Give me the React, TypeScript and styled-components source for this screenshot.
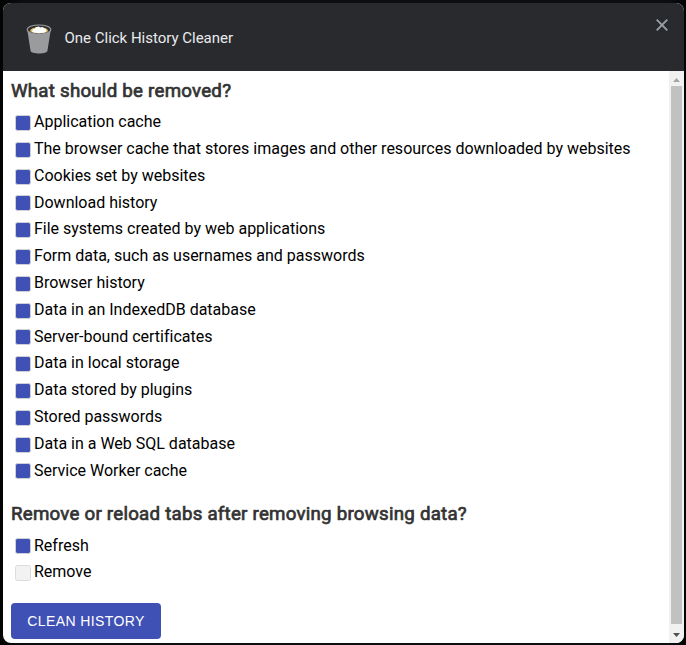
import React, { useState } from "react";
import styled, { createGlobalStyle } from "styled-components";

const GlobalStyle = createGlobalStyle`
  * { box-sizing: border-box; }
  body { margin: 0; background: #0b0c0e; font-family: Roboto, "Liberation Sans", sans-serif; }
`;

const Backdrop = styled.div`
  height: 645px;
  padding: 3px 2px 2px 3px;
  background: linear-gradient(90deg, #030303 0, #0c0d10 22px, #0c0d10 670px, #030305 100%);
`;

const Dialog = styled.div`
  display: flex;
  flex-direction: column;
  height: 640px;
  overflow: hidden;
  border-radius: 8px;
  background: #fff;
`;

const Header = styled.header`
  display: flex;
  flex: none;
  height: 68px;
  align-items: center;
  padding: 2px 15px 0 23px;
  background: #292a2d;
`;

const Title = styled.div`
  flex: 1;
  margin-left: 12.5px;
  color: #e8eaed;
  font-size: 15px;
  line-height: 20px;
  letter-spacing: -0.01px;
`;

const CloseButton = styled.button`
  display: flex;
  align-self: flex-start;
  margin-top: 13px;
  padding: 0;
  border: 0;
  background: none;
`;

const Body = styled.div`
  display: flex;
  flex: 1;
  min-height: 0;
`;

const Content = styled.main`
  flex: 1;
  padding: 9px 8px 0;
`;

const Heading = styled.h3`
  height: 22px;
  margin: 0;
  color: #333;
  font-size: 18.72px;
  font-weight: 400;
  line-height: 22px;
  letter-spacing: 0.235px;
  -webkit-text-stroke: 0.7px #333;
`;

const Options = styled.div<{ $top: number }>`
  padding-top: ${({ $top }) => $top}px;
`;

const Option = styled.label`
  display: flex;
  align-items: flex-start;
  height: 26.8px;
  padding: 0.2px 0 0 4px;
  color: #000;
  font-size: 16px;
  line-height: 21px;
  letter-spacing: -0.005px;
  white-space: nowrap;
`;

const Checkbox = styled.input`
  appearance: none;
  flex: none;
  width: 16px;
  height: 16px;
  margin: 3.8px 3px 0 0;
  border: 1px solid #dcdcdc;
  border-radius: 2.5px;
  background: #f2f2f2;

  &:checked {
    border-color: #cfd0d8;
    background: #3f51b5;
  }
`;

const CleanButton = styled.button`
  display: block;
  width: 150px;
  height: 36px;
  padding: 0;
  border: 0;
  border-radius: 4px;
  background: #3f51b5;
  color: #fff;
  font: 14px/36px "Liberation Sans", Arial, sans-serif;
  letter-spacing: 0.4px;
  text-transform: uppercase;
`;

const Scrollbar = styled.div`
  display: flex;
  flex: none;
  flex-direction: column;
  align-items: center;
  width: 15px;
  background: #f1f1f1;
`;

const ScrollArrow = styled.div`
  display: flex;
  flex: none;
  height: 15px;
  padding-top: 2px;
  align-items: center;
`;

const ScrollThumb = styled.div`
  flex: none;
  width: 11px;
  height: 538px;
  margin-bottom: 2px;
  background: #c1c1c1;
`;

const dataTypes = [
  "Application cache",
  "The browser cache that stores images and other resources downloaded by websites",
  "Cookies set by websites",
  "Download history",
  "File systems created by web applications",
  "Form data, such as usernames and passwords",
  "Browser history",
  "Data in an IndexedDB database",
  "Server-bound certificates",
  "Data in local storage",
  "Data stored by plugins",
  "Stored passwords",
  "Data in a Web SQL database",
  "Service Worker cache",
];

function BinIcon() {
  return (
    <svg width="26" height="36" viewBox="0 -2 26 36" aria-hidden="true">
      <path d="M1.2 7.5 4.6 29.1C5 32.4 21 32.4 21.4 29.1L24.8 7.5Z" fill="#999b9c" />
      <ellipse cx="13" cy="7.5" rx="11.8" ry="4.5" fill="#303133" stroke="#999b9c" strokeWidth="1.1" />
      <path d="M4 9.3c.5-3 3.5-3.6 6-3.6h7c3 0 4.7 1.2 5.2 3.5-4 2.6-14.2 2.6-18.2.1Z" fill="#e2bc58" />
      <path d="M6 10 6.7 7.2 9 6.8 9.5 5.2l3.2-.6 1.5.8 2.8-.4 1 1.5 1.8.6.6 2.9c-4 1.6-10.2 1.5-14.4 0Z" fill="#fff" />
    </svg>
  );
}

function Choice({ label, initial = true }: { label: string; initial?: boolean }) {
  const [checked, setChecked] = useState(initial);
  return (
    <Option>
      <Checkbox type="checkbox" checked={checked} onChange={() => setChecked(!checked)} />
      {label}
    </Option>
  );
}

export default function App() {
  return (
    <>
      <GlobalStyle />
      <Backdrop>
        <Dialog>
          <Header>
            <BinIcon />
            <Title>One Click History Cleaner</Title>
            <CloseButton aria-label="Close">
              <svg width="14" height="14" viewBox="0 0 14 14">
                <path d="M1.7 1.7 12.3 12.3M12.3 1.7 1.7 12.3" stroke="#9aa0a6" strokeWidth="1.9" />
              </svg>
            </CloseButton>
          </Header>
          <Body>
            <Content>
              <Heading>What should be removed?</Heading>
              <Options $top={9}>
                {dataTypes.map((label) => <Choice key={label} label={label} />)}
              </Options>
              <Options $top={17}>
                <Heading>Remove or reload tabs after removing browsing data?</Heading>
              </Options>
              <Options $top={9.2}>
                <Choice label="Refresh" />
                <Choice label="Remove" initial={false} />
              </Options>
              <Options $top={15}>
                <CleanButton>Clean history</CleanButton>
              </Options>
            </Content>
            <Scrollbar>
              <ScrollArrow>
                <svg width="7" height="4" viewBox="0 0 7 4"><path d="M0 4 3.5 0 7 4Z" fill="#a3a3a3" /></svg>
              </ScrollArrow>
              <ScrollThumb />
              <ScrollArrow>
                <svg width="7" height="4" viewBox="0 0 7 4"><path d="M0 0 3.5 4 7 0Z" fill="#505050" /></svg>
              </ScrollArrow>
            </Scrollbar>
          </Body>
        </Dialog>
      </Backdrop>
    </>
  );
}
